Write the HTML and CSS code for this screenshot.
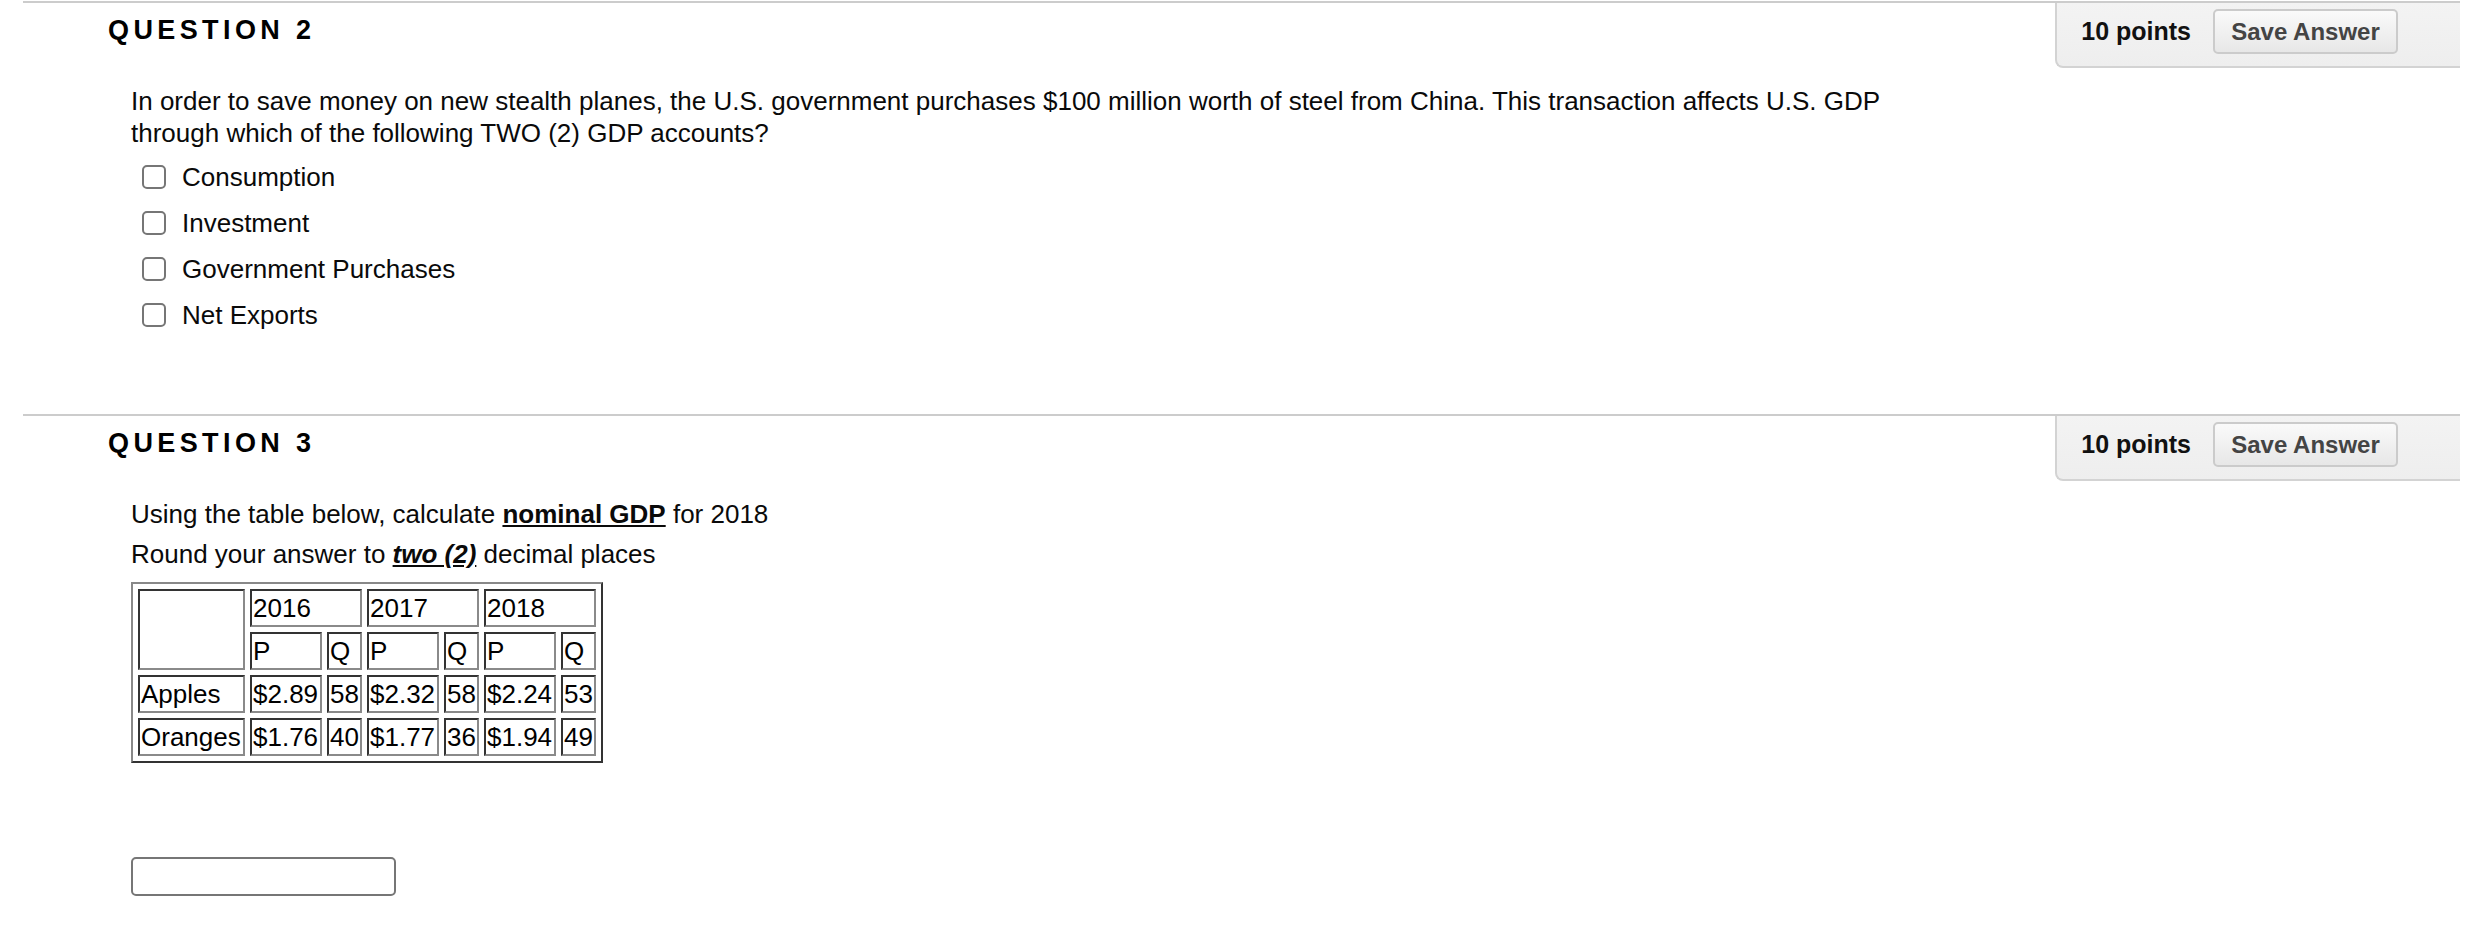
FILE: index.html
```html
<!DOCTYPE html>
<html lang="en">
<head>
<meta charset="utf-8">
<title>Questions</title>
<link rel="stylesheet" href="styles.css">
</head>
<body>
<div class="page">
  <section class="question q-two">
    <div class="q-head">
      <h2 class="q-title">QUESTION 2</h2>
      <div class="points-panel">
        <span class="points">10 points</span>
        <button class="save-btn" type="button">Save Answer</button>
      </div>
    </div>
    <div class="q-body">
      <p class="q-text">In order to save money on new stealth planes, the U.S. government purchases $100 million worth of steel from China. This transaction affects U.S. GDP through which of the following TWO (2) GDP accounts?</p>
      <ul class="options">
        <li class="option"><input class="check" type="checkbox"><span>Consumption</span></li>
        <li class="option"><input class="check" type="checkbox"><span>Investment</span></li>
        <li class="option"><input class="check" type="checkbox"><span>Government Purchases</span></li>
        <li class="option"><input class="check" type="checkbox"><span>Net Exports</span></li>
      </ul>
    </div>
  </section>

  <section class="question q-three">
    <div class="q-head">
      <h2 class="q-title">QUESTION 3</h2>
      <div class="points-panel">
        <span class="points">10 points</span>
        <button class="save-btn" type="button">Save Answer</button>
      </div>
    </div>
    <div class="q-body">
      <p class="q-line">Using the table below, calculate <b><u>nominal GDP</u></b> for 2018</p>
      <p class="q-line second">Round your answer to <b><i><u>two (2)</u></i></b> decimal places</p>
      <table class="data">
        <tr>
          <td class="c-name" rowspan="2"></td>
          <td colspan="2">2016</td>
          <td colspan="2">2017</td>
          <td colspan="2">2018</td>
        </tr>
        <tr>
          <td class="c-p">P</td><td class="c-q">Q</td>
          <td class="c-p">P</td><td class="c-q">Q</td>
          <td class="c-p">P</td><td class="c-q">Q</td>
        </tr>
        <tr>
          <td class="c-name">Apples</td>
          <td class="c-p">$2.89</td><td class="c-q">58</td>
          <td class="c-p">$2.32</td><td class="c-q">58</td>
          <td class="c-p">$2.24</td><td class="c-q">53</td>
        </tr>
        <tr>
          <td class="c-name">Oranges</td>
          <td class="c-p">$1.76</td><td class="c-q">40</td>
          <td class="c-p">$1.77</td><td class="c-q">36</td>
          <td class="c-p">$1.94</td><td class="c-q">49</td>
        </tr>
      </table>
      <input class="answer" type="text" aria-label="Answer">
    </div>
  </section>
</div>
</body>
</html>
```
FILE: styles.css
```css
* { box-sizing: border-box; }

html, body {
  margin: 0;
  padding: 0;
  background: #ffffff;
}

body {
  font-family: "Liberation Sans", Arial, Helvetica, sans-serif;
  font-size: 26px;
  color: #0a0a0a;
}

.page {
  padding-top: 1px;
  margin: 0 17px 0 23px;
}

.question {
  border-top: 2px solid #cccccc;
}

.q-two { padding-bottom: 76px; }

.q-head {
  display: flex;
  justify-content: space-between;
  align-items: flex-start;
}

.q-title {
  margin: 0;
  padding: 12px 0 0 85px;
  font-size: 27px;
  line-height: 30px;
  font-weight: bold;
  letter-spacing: 4.4px;
  color: #000;
}

.points-panel {
  display: flex;
  align-items: center;
  gap: 22px;
  padding: 6px 62px 12px 24px;
  background: linear-gradient(#f3f3f3, #eeeeee);
  border-left: 2px solid #d3d3d3;
  border-bottom: 2px solid #d3d3d3;
  border-bottom-left-radius: 8px;
}

.points {
  font-weight: bold;
  font-size: 25px;
  color: #111;
}

.save-btn {
  height: 45px;
  width: 185px;
  padding: 0;
  font-family: "Liberation Sans", Arial, Helvetica, sans-serif;
  font-size: 24px;
  font-weight: bold;
  color: #444;
  background: linear-gradient(#fafafa, #e7e7e7);
  border: 2px solid #cbcbcb;
  border-radius: 5px;
}

.q-body {
  padding: 17px 0 0 108px;
}

.q-text {
  margin: 0;
  max-width: 1820px;
  line-height: 32px;
}

.options {
  list-style: none;
  margin: 5px 0 0;
  padding: 0 0 0 11px;
}

.option {
  display: flex;
  align-items: center;
  gap: 16px;
  height: 46px;
}

.check {
  appearance: none;
  -webkit-appearance: none;
  margin: 0;
  width: 24px;
  height: 24px;
  border: 2px solid #767676;
  border-radius: 5px;
  background: #fff;
}

.q-line {
  margin: 0;
  line-height: 32px;
}

.q-line.second { margin-top: 8px; }

.data {
  margin-top: 12px;
  border-collapse: separate;
  border-spacing: 5px;
  border: 2px solid;
  border-color: #888 #333 #333 #888;
}

.data td {
  border: 2px solid;
  border-color: #333 #8a8a8a #8a8a8a #333;
  padding: 2px 1px;
  line-height: 30px;
  font-size: 26px;
  color: #000;
  vertical-align: middle;
  white-space: nowrap;
}

.data td.c-name { width: 107px; }
.data td.c-p { width: 72px; }
.data td.c-q { width: 35px; }

.answer {
  display: block;
  margin-top: 94px;
  width: 265px;
  height: 39px;
  border: 2px solid #767676;
  border-radius: 5px;
  background: #fff;
}
```
